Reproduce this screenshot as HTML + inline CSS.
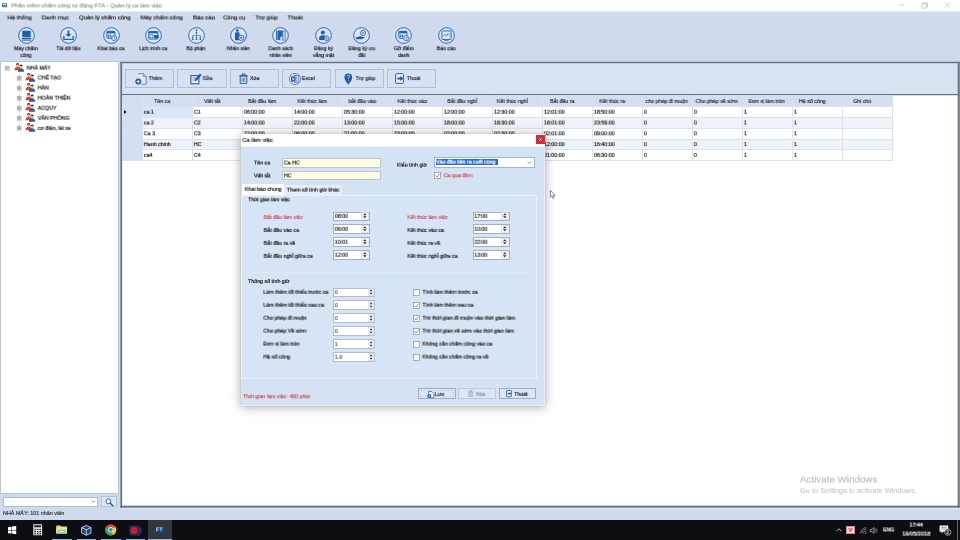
<!DOCTYPE html>
<html><head><meta charset="utf-8"><title>Quản lý ca làm việc</title>
<style>
*{box-sizing:border-box;margin:0;padding:0}
html,body{width:960px;height:540px;overflow:hidden}
body{will-change:opacity;position:relative;background:#cfdbed;font-family:"Liberation Sans",sans-serif;font-size:5.3px;color:#181818;line-height:1;-webkit-text-stroke:0.2px}
.abs{position:absolute}
.t,.tc{will-change:transform;position:absolute;left:0;top:0;white-space:nowrap;line-height:1}
svg{position:absolute;overflow:visible}
</style></head><body>

<div class="abs" id="titlebar" style="left:0;top:0;width:960px;height:11px;background:#fff"></div>
<div class="abs" style="left:0;top:11px;width:960px;height:1px;background:#e9eff8"></div>
<svg style="left:2.4px;top:3.2px" width="5.4" height="4.6" viewBox="0 0 7 6"><rect x="0" y="0.3" width="6.6" height="5.2" rx="0.8" fill="#2f5d9a"/><rect x="1" y="1.2" width="4.6" height="1.6" fill="#dfe8f5"/><rect x="1" y="3.6" width="1.8" height="1.2" fill="#9fb9dc"/><rect x="3.6" y="3.6" width="2" height="1.2" fill="#9fb9dc"/></svg>
<div class="t" style="transform:translate(11.3px,6.42px) translateY(-50%) rotate(.03deg);font-size:5.95px;color:#9a9a9a">Phần mềm chấm công tự động FTA - Quản lý ca làm việc</div>
<svg style="left:895px;top:0" width="65" height="11" viewBox="0 0 65 11"><g stroke="#a9a9a9" stroke-width="0.55" fill="none"><path d="M4.2 5.1h5"/><path d="M27 3.9h4.3v4.3H27z M28.2 3.9V2.8h4.2v4.2h-1.1"/><path d="M50 2.7l4.8 4.8M54.8 2.7L50 7.5"/></g></svg>
<div class="abs" style="left:0;top:24px;width:960px;height:38px;background:linear-gradient(#cfdbed,#cfd9ef)"></div>
<div class="t" style="transform:translate(7.5px,17.42px) translateY(-50%) rotate(.03deg);font-size:6px;color:#1e1e1e">Hệ thống</div>
<div class="t" style="transform:translate(41.7px,17.42px) translateY(-50%) rotate(.03deg);font-size:6px;color:#1e1e1e">Danh mục</div>
<div class="t" style="transform:translate(79px,17.42px) translateY(-50%) rotate(.03deg);font-size:6px;color:#1e1e1e">Quản lý chấm công</div>
<div class="t" style="transform:translate(140.5px,17.42px) translateY(-50%) rotate(.03deg);font-size:6px;color:#1e1e1e">Máy chấm công</div>
<div class="t" style="transform:translate(193px,17.42px) translateY(-50%) rotate(.03deg);font-size:6px;color:#1e1e1e">Báo cáo</div>
<div class="t" style="transform:translate(223.2px,17.42px) translateY(-50%) rotate(.03deg);font-size:6px;color:#1e1e1e">Công cụ</div>
<div class="t" style="transform:translate(255.5px,17.42px) translateY(-50%) rotate(.03deg);font-size:6px;color:#1e1e1e">Trợ giúp</div>
<div class="t" style="transform:translate(287.5px,17.42px) translateY(-50%) rotate(.03deg);font-size:6px;color:#1e1e1e">Thoát</div>
<svg style="left:17.5px;top:26.6px" width="17" height="17" viewBox="-8.5 -8.5 17 17"><circle r="7.85" fill="#d9e6f6" stroke="#2c63a3" stroke-width="0.95"/><rect x="-4.2" y="-4.8" width="8.4" height="6.6" rx="0.6" fill="#1f5fb0"/><rect x="-4.6" y="2.4" width="9.2" height="1.3" fill="#1f5fb0"/><rect x="-4.6" y="4.2" width="9.2" height="0.9" fill="#1f5fb0"/></svg>
<div class="tc" style="transform:translate(26px,48.81px) translate(-50%,-50%) rotate(.03deg);color:#1c1c1c;font-size:5.15px">Máy chấm</div>
<div class="tc" style="transform:translate(26px,55.61px) translate(-50%,-50%) rotate(.03deg);color:#1c1c1c;font-size:5.15px">công</div>
<svg style="left:60px;top:26.6px" width="17" height="17" viewBox="-8.5 -8.5 17 17"><circle r="7.85" fill="#d9e6f6" stroke="#2c63a3" stroke-width="0.95"/><path d="M-0.9 -5h1.8v3.4h2L0 1.6l-2.9-3.2h2z" fill="#1f5fb0"/><path d="M-4.6 0.2v3.6h9.2V0.2" fill="none" stroke="#1f5fb0" stroke-width="1.3"/></svg>
<div class="tc" style="transform:translate(68.5px,48.81px) translate(-50%,-50%) rotate(.03deg);color:#1c1c1c;font-size:5.15px">Tải dữ liệu</div>
<svg style="left:102.5px;top:26.6px" width="17" height="17" viewBox="-8.5 -8.5 17 17"><circle r="7.85" fill="#d9e6f6" stroke="#2c63a3" stroke-width="0.95"/><rect x="-4.6" y="-4.2" width="8" height="7" rx="0.6" fill="none" stroke="#1f5fb0" stroke-width="0.9"/><rect x="-4.6" y="-4.2" width="8" height="2" fill="#1f5fb0"/><path d="M-3 -1v3M-1 -1v3M-4 0.6h4" stroke="#1f5fb0" stroke-width="0.7"/><circle cx="2.6" cy="2.6" r="2.5" fill="#d9e6f6" stroke="#1f5fb0" stroke-width="0.8"/><path d="M2.6 1.2v1.5h1.2" fill="none" stroke="#1f5fb0" stroke-width="0.6"/></svg>
<div class="tc" style="transform:translate(111px,48.81px) translate(-50%,-50%) rotate(.03deg);color:#1c1c1c;font-size:5.15px">Khai báo ca</div>
<svg style="left:144.8px;top:26.6px" width="17" height="17" viewBox="-8.5 -8.5 17 17"><circle r="7.85" fill="#d9e6f6" stroke="#2c63a3" stroke-width="0.95"/><rect x="-4.8" y="-4" width="9.2" height="7.6" rx="0.6" fill="none" stroke="#1f5fb0" stroke-width="0.9"/><rect x="-4.8" y="-4" width="9.2" height="1.8" fill="#1f5fb0"/><rect x="-3.6" y="-0.8" width="3" height="3.2" fill="none" stroke="#1f5fb0" stroke-width="0.6"/><rect x="0.4" y="-0.4" width="4.6" height="3.4" rx="0.8" fill="#1f5fb0"/></svg>
<div class="tc" style="transform:translate(153.3px,48.81px) translate(-50%,-50%) rotate(.03deg);color:#1c1c1c;font-size:5.15px">Lịch trình ca</div>
<svg style="left:187.5px;top:26.6px" width="17" height="17" viewBox="-8.5 -8.5 17 17"><circle r="7.85" fill="#d9e6f6" stroke="#2c63a3" stroke-width="0.95"/><circle cx="0" cy="-5.2" r="0.9" fill="#1f5fb0"/><path d="M-0.9 -2.2q0-1.8 0.9-1.8t0.9 1.8z" fill="#1f5fb0"/><path d="M0 -2.2v2.2M-3.8 1.6v-1.6h7.6v1.6M0 0v1.6" fill="none" stroke="#1f5fb0" stroke-width="0.6"/><g fill="#1f5fb0"><circle cx="-3.8" cy="2" r="0.7"/><path d="M-4.7 4.4q0-1.6 0.9-1.6t0.9 1.6z"/><circle cx="0" cy="2" r="0.7"/><path d="M-0.9 4.4q0-1.6 0.9-1.6t0.9 1.6z"/><circle cx="3.8" cy="2" r="0.7"/><path d="M2.9 4.4q0-1.6 0.9-1.6t0.9 1.6z"/></g></svg>
<div class="tc" style="transform:translate(196px,48.81px) translate(-50%,-50%) rotate(.03deg);color:#1c1c1c;font-size:5.15px">Bộ phận</div>
<svg style="left:229.8px;top:26.6px" width="17" height="17" viewBox="-8.5 -8.5 17 17"><circle r="7.85" fill="#d9e6f6" stroke="#2c63a3" stroke-width="0.95"/><circle cx="-1.2" cy="-4.9" r="1.4" fill="#1f5fb0"/><path d="M-3.5 4.8v-6.8q0-1.2 1.2-1.2h2.2q1.2 0 1.2 1.2v6.8z" fill="#1f5fb0"/><circle cx="2.8" cy="2.3" r="2.7" fill="#d9e6f6" stroke="#1f5fb0" stroke-width="0.8"/><path d="M2.8 0.9v2.8M1.4 2.3h2.8" stroke="#1f5fb0" stroke-width="0.7"/></svg>
<div class="tc" style="transform:translate(238.3px,48.81px) translate(-50%,-50%) rotate(.03deg);color:#1c1c1c;font-size:5.15px">Nhân viên</div>
<svg style="left:272.2px;top:26.6px" width="17" height="17" viewBox="-8.5 -8.5 17 17"><circle r="7.85" fill="#d9e6f6" stroke="#2c63a3" stroke-width="0.95"/><rect x="-4.4" y="-5" width="6.4" height="9.6" fill="#1f5fb0"/><path d="M-2.8 -5v9.6" stroke="#d9e6f6" stroke-width="0.5"/><rect x="2.4" y="-4.6" width="2.2" height="9.2" fill="none" stroke="#1f5fb0" stroke-width="0.7"/><path d="M-0.2 4.6v-2.6l1-1.4 1 1.4v2.6z" fill="#d9e6f6"/></svg>
<div class="tc" style="transform:translate(280.7px,48.81px) translate(-50%,-50%) rotate(.03deg);color:#1c1c1c;font-size:5.15px">Danh sách</div>
<div class="tc" style="transform:translate(280.7px,55.61px) translate(-50%,-50%) rotate(.03deg);color:#1c1c1c;font-size:5.15px">nhân viên</div>
<svg style="left:315.1px;top:26.6px" width="17" height="17" viewBox="-8.5 -8.5 17 17"><circle r="7.85" fill="#d9e6f6" stroke="#2c63a3" stroke-width="0.95"/><circle cx="-0.6" cy="-3" r="2.1" fill="#1f5fb0"/><path d="M-4.4 4.6v-1.8q0-3 3.8-3t3.8 3v1.8z" fill="#1f5fb0"/><circle cx="3" cy="2.8" r="2.3" fill="#d9e6f6" stroke="#1f5fb0" stroke-width="0.8"/><path d="M3 1.6v2.4M1.8 2.8h2.4" stroke="#1f5fb0" stroke-width="0.6"/></svg>
<div class="tc" style="transform:translate(323.6px,48.81px) translate(-50%,-50%) rotate(.03deg);color:#1c1c1c;font-size:5.15px">Đăng ký</div>
<div class="tc" style="transform:translate(323.6px,55.61px) translate(-50%,-50%) rotate(.03deg);color:#1c1c1c;font-size:5.15px">vắng mặt</div>
<svg style="left:353.3px;top:26.6px" width="17" height="17" viewBox="-8.5 -8.5 17 17"><circle r="7.85" fill="#d9e6f6" stroke="#2c63a3" stroke-width="0.95"/><circle cx="1.6" cy="-2.6" r="2.6" fill="none" stroke="#1f5fb0" stroke-width="0.8"/><path d="M1.6 -3.8v2.4M0.4 -2.6h2.4" stroke="#1f5fb0" stroke-width="0.6"/><path d="M-5.4 1.4h2l2-0.8 2.6 0.8h-2l4.6 0.2-3.4 2.2h-5.8z" fill="#1f5fb0"/></svg>
<div class="tc" style="transform:translate(361.8px,48.81px) translate(-50%,-50%) rotate(.03deg);color:#1c1c1c;font-size:5.15px">Đăng ký ưu</div>
<div class="tc" style="transform:translate(361.8px,55.61px) translate(-50%,-50%) rotate(.03deg);color:#1c1c1c;font-size:5.15px">đãi</div>
<svg style="left:395.3px;top:26.6px" width="17" height="17" viewBox="-8.5 -8.5 17 17"><circle r="7.85" fill="#d9e6f6" stroke="#2c63a3" stroke-width="0.95"/><rect x="-4.6" y="-4.2" width="8" height="7" rx="0.6" fill="none" stroke="#1f5fb0" stroke-width="0.9"/><rect x="-4.6" y="-4.2" width="8" height="2" fill="#1f5fb0"/><path d="M-3 -1v3M-1 -1v3M-4 0.6h4" stroke="#1f5fb0" stroke-width="0.7"/><circle cx="2.6" cy="2.6" r="2.5" fill="#d9e6f6" stroke="#1f5fb0" stroke-width="0.8"/><path d="M2.6 1.2v1.5h1.2" fill="none" stroke="#1f5fb0" stroke-width="0.6"/></svg>
<div class="tc" style="transform:translate(403.8px,48.81px) translate(-50%,-50%) rotate(.03deg);color:#1c1c1c;font-size:5.15px">Gỡ điểm</div>
<div class="tc" style="transform:translate(403.8px,55.61px) translate(-50%,-50%) rotate(.03deg);color:#1c1c1c;font-size:5.15px">danh</div>
<svg style="left:437.7px;top:26.6px" width="17" height="17" viewBox="-8.5 -8.5 17 17"><circle r="7.85" fill="#d9e6f6" stroke="#2c63a3" stroke-width="0.95"/><rect x="-4.6" y="-4.6" width="9.2" height="8.6" rx="0.8" fill="none" stroke="#1f5fb0" stroke-width="0.9"/><path d="M-3.2 0.4l1.8-1.4 1.4 1.6 1.6-2.4 1.6 1.4" fill="none" stroke="#1f5fb0" stroke-width="0.7"/><path d="M-2 5.2h4" stroke="#1f5fb0" stroke-width="0.8"/></svg>
<div class="tc" style="transform:translate(446.2px,48.81px) translate(-50%,-50%) rotate(.03deg);color:#1c1c1c;font-size:5.15px">Báo cáo</div>
<div class="abs" style="left:0px;top:61px;width:119px;height:433px;background:#fff;border:1px solid #bcc6d4"></div>
<div class="abs" style="left:18.8px;top:73px;width:0;height:55px;border-left:0.5px dotted #d0d0d0"></div>
<svg style="left:5.4px;top:66.2px" width="4.4" height="4.4" viewBox="0 0 4.4 4.4"><rect x="0.3" y="0.3" width="3.8" height="3.8" fill="#e2e2e2" stroke="#9c9c9c" stroke-width="0.7"/><path d="M1.2 2.2h2" stroke="#444" stroke-width="0.5"/></svg>
<svg style="left:13.8px;top:63.3px" width="11" height="9" viewBox="0 0 11 9"><circle cx="3.6" cy="2.1" r="1.6" fill="#e9a57f"/><path d="M1.9 1.9q0.2-1.9 1.8-1.9t1.7 1.7q-1.5 0.1-2-0.7-0.4 0.9-1.5 0.9z" fill="#4a2a1c"/><path d="M0.5 7.2q0-3.5 3.1-3.5t3.1 3.5z" fill="#d8452d"/><circle cx="7" cy="3.6" r="1.6" fill="#ecc09c"/><path d="M5.3 3.4q0.2-1.9 1.8-1.9t1.7 1.7q-1.5 0.1-2-0.7-0.4 0.9-1.5 0.9z" fill="#2a2422"/><path d="M3.9 8.8q0-3.5 3.1-3.5t3.1 3.5z" fill="#2a5aa3"/></svg>
<div class="t" style="transform:translate(26.7px,68.36px) translateY(-50%) rotate(.03deg);">NHÀ MÁY</div>
<svg style="left:17px;top:76px" width="4.4" height="4.4" viewBox="0 0 4.4 4.4"><rect x="0.3" y="0.3" width="3.8" height="3.8" fill="#e2e2e2" stroke="#9c9c9c" stroke-width="0.7"/><path d="M1.2 2.2h2M2.2 1.2v2" stroke="#444" stroke-width="0.5"/></svg>
<svg style="left:25.4px;top:72.9px" width="11" height="9" viewBox="0 0 11 9"><circle cx="3.6" cy="2.1" r="1.6" fill="#e9a57f"/><path d="M1.9 1.9q0.2-1.9 1.8-1.9t1.7 1.7q-1.5 0.1-2-0.7-0.4 0.9-1.5 0.9z" fill="#4a2a1c"/><path d="M0.5 7.2q0-3.5 3.1-3.5t3.1 3.5z" fill="#d8452d"/><circle cx="7" cy="3.6" r="1.6" fill="#ecc09c"/><path d="M5.3 3.4q0.2-1.9 1.8-1.9t1.7 1.7q-1.5 0.1-2-0.7-0.4 0.9-1.5 0.9z" fill="#2a2422"/><path d="M3.9 8.8q0-3.5 3.1-3.5t3.1 3.5z" fill="#2a5aa3"/></svg>
<div class="t" style="transform:translate(37.7px,78.16px) translateY(-50%) rotate(.03deg);">CHẾ TẠO</div>
<svg style="left:17px;top:86.08px" width="4.4" height="4.4" viewBox="0 0 4.4 4.4"><rect x="0.3" y="0.3" width="3.8" height="3.8" fill="#e2e2e2" stroke="#9c9c9c" stroke-width="0.7"/><path d="M1.2 2.2h2M2.2 1.2v2" stroke="#444" stroke-width="0.5"/></svg>
<svg style="left:25.4px;top:82.98px" width="11" height="9" viewBox="0 0 11 9"><circle cx="3.6" cy="2.1" r="1.6" fill="#e9a57f"/><path d="M1.9 1.9q0.2-1.9 1.8-1.9t1.7 1.7q-1.5 0.1-2-0.7-0.4 0.9-1.5 0.9z" fill="#4a2a1c"/><path d="M0.5 7.2q0-3.5 3.1-3.5t3.1 3.5z" fill="#d8452d"/><circle cx="7" cy="3.6" r="1.6" fill="#ecc09c"/><path d="M5.3 3.4q0.2-1.9 1.8-1.9t1.7 1.7q-1.5 0.1-2-0.7-0.4 0.9-1.5 0.9z" fill="#2a2422"/><path d="M3.9 8.8q0-3.5 3.1-3.5t3.1 3.5z" fill="#2a5aa3"/></svg>
<div class="t" style="transform:translate(37.7px,88.24px) translateY(-50%) rotate(.03deg);">HÀN</div>
<svg style="left:17px;top:96.16px" width="4.4" height="4.4" viewBox="0 0 4.4 4.4"><rect x="0.3" y="0.3" width="3.8" height="3.8" fill="#e2e2e2" stroke="#9c9c9c" stroke-width="0.7"/><path d="M1.2 2.2h2M2.2 1.2v2" stroke="#444" stroke-width="0.5"/></svg>
<svg style="left:25.4px;top:93.06px" width="11" height="9" viewBox="0 0 11 9"><circle cx="3.6" cy="2.1" r="1.6" fill="#e9a57f"/><path d="M1.9 1.9q0.2-1.9 1.8-1.9t1.7 1.7q-1.5 0.1-2-0.7-0.4 0.9-1.5 0.9z" fill="#4a2a1c"/><path d="M0.5 7.2q0-3.5 3.1-3.5t3.1 3.5z" fill="#d8452d"/><circle cx="7" cy="3.6" r="1.6" fill="#ecc09c"/><path d="M5.3 3.4q0.2-1.9 1.8-1.9t1.7 1.7q-1.5 0.1-2-0.7-0.4 0.9-1.5 0.9z" fill="#2a2422"/><path d="M3.9 8.8q0-3.5 3.1-3.5t3.1 3.5z" fill="#2a5aa3"/></svg>
<div class="t" style="transform:translate(37.7px,98.32px) translateY(-50%) rotate(.03deg);">HOÀN THIỆN</div>
<svg style="left:17px;top:106.24px" width="4.4" height="4.4" viewBox="0 0 4.4 4.4"><rect x="0.3" y="0.3" width="3.8" height="3.8" fill="#e2e2e2" stroke="#9c9c9c" stroke-width="0.7"/><path d="M1.2 2.2h2M2.2 1.2v2" stroke="#444" stroke-width="0.5"/></svg>
<svg style="left:25.4px;top:103.14px" width="11" height="9" viewBox="0 0 11 9"><circle cx="3.6" cy="2.1" r="1.6" fill="#e9a57f"/><path d="M1.9 1.9q0.2-1.9 1.8-1.9t1.7 1.7q-1.5 0.1-2-0.7-0.4 0.9-1.5 0.9z" fill="#4a2a1c"/><path d="M0.5 7.2q0-3.5 3.1-3.5t3.1 3.5z" fill="#d8452d"/><circle cx="7" cy="3.6" r="1.6" fill="#ecc09c"/><path d="M5.3 3.4q0.2-1.9 1.8-1.9t1.7 1.7q-1.5 0.1-2-0.7-0.4 0.9-1.5 0.9z" fill="#2a2422"/><path d="M3.9 8.8q0-3.5 3.1-3.5t3.1 3.5z" fill="#2a5aa3"/></svg>
<div class="t" style="transform:translate(37.7px,108.4px) translateY(-50%) rotate(.03deg);">ACQUY</div>
<svg style="left:17px;top:116.32px" width="4.4" height="4.4" viewBox="0 0 4.4 4.4"><rect x="0.3" y="0.3" width="3.8" height="3.8" fill="#e2e2e2" stroke="#9c9c9c" stroke-width="0.7"/><path d="M1.2 2.2h2M2.2 1.2v2" stroke="#444" stroke-width="0.5"/></svg>
<svg style="left:25.4px;top:113.22px" width="11" height="9" viewBox="0 0 11 9"><circle cx="3.6" cy="2.1" r="1.6" fill="#e9a57f"/><path d="M1.9 1.9q0.2-1.9 1.8-1.9t1.7 1.7q-1.5 0.1-2-0.7-0.4 0.9-1.5 0.9z" fill="#4a2a1c"/><path d="M0.5 7.2q0-3.5 3.1-3.5t3.1 3.5z" fill="#d8452d"/><circle cx="7" cy="3.6" r="1.6" fill="#ecc09c"/><path d="M5.3 3.4q0.2-1.9 1.8-1.9t1.7 1.7q-1.5 0.1-2-0.7-0.4 0.9-1.5 0.9z" fill="#2a2422"/><path d="M3.9 8.8q0-3.5 3.1-3.5t3.1 3.5z" fill="#2a5aa3"/></svg>
<div class="t" style="transform:translate(37.7px,118.48px) translateY(-50%) rotate(.03deg);">VĂN PHÒNG</div>
<svg style="left:17px;top:126.4px" width="4.4" height="4.4" viewBox="0 0 4.4 4.4"><rect x="0.3" y="0.3" width="3.8" height="3.8" fill="#e2e2e2" stroke="#9c9c9c" stroke-width="0.7"/><path d="M1.2 2.2h2M2.2 1.2v2" stroke="#444" stroke-width="0.5"/></svg>
<svg style="left:25.4px;top:123.3px" width="11" height="9" viewBox="0 0 11 9"><circle cx="3.6" cy="2.1" r="1.6" fill="#e9a57f"/><path d="M1.9 1.9q0.2-1.9 1.8-1.9t1.7 1.7q-1.5 0.1-2-0.7-0.4 0.9-1.5 0.9z" fill="#4a2a1c"/><path d="M0.5 7.2q0-3.5 3.1-3.5t3.1 3.5z" fill="#d8452d"/><circle cx="7" cy="3.6" r="1.6" fill="#ecc09c"/><path d="M5.3 3.4q0.2-1.9 1.8-1.9t1.7 1.7q-1.5 0.1-2-0.7-0.4 0.9-1.5 0.9z" fill="#2a2422"/><path d="M3.9 8.8q0-3.5 3.1-3.5t3.1 3.5z" fill="#2a5aa3"/></svg>
<div class="t" style="transform:translate(37.7px,128.56px) translateY(-50%) rotate(.03deg);">cơ điện, lái xe</div>
<div class="abs" style="left:2.5px;top:496.6px;width:95.2px;height:10px;background:#fff;border:0.5px solid #b1bed2"></div>
<svg style="left:90.5px;top:500px" width="5" height="3" viewBox="0 0 5 3"><path d="M0.6 0.5l1.9 1.9 1.9-1.9" fill="none" stroke="#555" stroke-width="0.6"/></svg>
<div class="abs" style="left:101.2px;top:495.8px;width:15.6px;height:11.6px;background:#dce7f6;border:0.5px solid #b7c5da"></div>
<svg style="left:104.5px;top:497.6px" width="9" height="9" viewBox="0 0 9 9"><circle cx="3.4" cy="3.4" r="2.5" fill="#eaf2fb" stroke="#2f5f9f" stroke-width="0.9"/><path d="M5.3 5.3l2.6 2.6" stroke="#27466f" stroke-width="1.3" stroke-linecap="round"/></svg>
<div class="t" style="transform:translate(3px,513.68px) translateY(-50%) rotate(.03deg);color:#3c3c3c;font-size:5.4px">NHÀ MÁY: 101 nhân viên</div>
<div class="abs" id="rp" style="left:121px;top:62px;width:838px;height:445px;background:#d8e4f4"></div>
<div class="abs" style="left:124.7px;top:69.3px;width:49.3px;height:18.3px;background:#d6e2f3;border:0.6px solid #b1c0d7"></div>
<svg style="left:135.1px;top:72.6px" width="12" height="12" viewBox="0 0 12 12"><path d="M3.2 0.6h5l3 3v7.6H6.4" fill="#e4edf9" stroke="#2f5f9f" stroke-width="0.7"/><path d="M8.2 0.6v3h3" fill="none" stroke="#2f5f9f" stroke-width="0.6"/><circle cx="3.3" cy="8.6" r="3" fill="#1f5aa8"/><path d="M3.3 6.9v3.4M1.6 8.6h3.4" stroke="#fff" stroke-width="0.9"/></svg>
<div class="t" style="transform:translate(148.7px,78.76px) translateY(-50%) rotate(.03deg);font-size:5.3px;color:#2a2a2a">Thêm</div>
<div class="abs" style="left:177.3px;top:69.3px;width:49.3px;height:18.3px;background:#d6e2f3;border:0.6px solid #b1c0d7"></div>
<svg style="left:189.9px;top:72.6px" width="12" height="12" viewBox="0 0 12 12"><rect x="0.9" y="2.6" width="8" height="8.2" fill="#e4edf9" stroke="#2f5f9f" stroke-width="1.1"/><path d="M2.6 5h3M2.6 7h2.2" stroke="#2f5f9f" stroke-width="0.7"/><path d="M4.6 8.2l0.7-2.4L10 0.6l1.6 1.5-4.7 5.3z" fill="#1f5aa8"/></svg>
<div class="t" style="transform:translate(202.5px,78.76px) translateY(-50%) rotate(.03deg);font-size:5.3px;color:#2a2a2a">Sửa</div>
<div class="abs" style="left:229.8px;top:69.3px;width:49.3px;height:18.3px;background:#d6e2f3;border:0.6px solid #b1c0d7"></div>
<svg style="left:238.6px;top:72.8px" width="9" height="11" viewBox="0 0 9 11"><path d="M1.2 3.2h6.6v7.2H1.2z" fill="#dfe9f7" stroke="#2f5f9f" stroke-width="1"/><path d="M0.3 2.6h8.4M3 2.4V0.9h3v1.5" fill="none" stroke="#2f5f9f" stroke-width="1"/><path d="M3.1 4.8v4M4.5 4.8v4M5.9 4.8v4" stroke="#2f5f9f" stroke-width="0.7"/></svg>
<div class="t" style="transform:translate(250px,78.76px) translateY(-50%) rotate(.03deg);font-size:5.3px;color:#2a2a2a">Xóa</div>
<div class="abs" style="left:282.2px;top:69.3px;width:49.3px;height:18.3px;background:#d6e2f3;border:0.6px solid #b1c0d7"></div>
<svg style="left:288.7px;top:72.5px" width="12" height="12" viewBox="0 0 12 12"><circle cx="6" cy="6" r="5.6" fill="#e4edf9" stroke="#2f5f9f" stroke-width="0.7"/><rect x="5.6" y="2.6" width="4.2" height="6.8" fill="#f4f8fd" stroke="#2f5f9f" stroke-width="0.6"/><path d="M7.6 2.6v6.8M5.6 4.8h4.2M5.6 7.2h4.2" stroke="#2f5f9f" stroke-width="0.4"/><rect x="2" y="3.4" width="4.6" height="5.2" fill="#1f5aa8"/><path d="M3.2 4.6l2.2 2.8M5.4 4.6L3.2 7.4" stroke="#fff" stroke-width="0.7"/></svg>
<div class="t" style="transform:translate(301.9px,78.76px) translateY(-50%) rotate(.03deg);font-size:5.3px;color:#2a2a2a">Excel</div>
<div class="abs" style="left:334.6px;top:69.3px;width:49.3px;height:18.3px;background:#d6e2f3;border:0.6px solid #b1c0d7"></div>
<svg style="left:343.6px;top:72.7px" width="8.6" height="12" viewBox="0 0 8.6 12"><path d="M4.3 11.8C2.4 8.8 0.4 7 0.4 4.4a3.9 3.9 0 017.8 0C8.2 7 6.2 8.8 4.3 11.8z" fill="#1f5aa8"/><path d="M3 3.4q0.1-1.2 1.4-1.2t1.3 1.1q0 0.8-1.3 1.5v0.8" fill="none" stroke="#e4edf9" stroke-width="0.8"/><circle cx="4.4" cy="6.9" r="0.5" fill="#e4edf9"/></svg>
<div class="t" style="transform:translate(355.6px,78.76px) translateY(-50%) rotate(.03deg);font-size:5.3px;color:#2a2a2a">Trợ giúp</div>
<div class="abs" style="left:387px;top:69.3px;width:49.3px;height:18.3px;background:#d6e2f3;border:0.6px solid #b1c0d7"></div>
<svg style="left:395px;top:73px" width="9" height="11" viewBox="0 0 9 11"><rect x="0.6" y="0.6" width="7.8" height="9.8" rx="0.8" fill="#e4edf9" stroke="#2f5f9f" stroke-width="1"/><path d="M2.4 4.6h3V3l3 2.5-3 2.5V6.4h-3z" fill="#1f5aa8"/></svg>
<div class="t" style="transform:translate(406.9px,78.76px) translateY(-50%) rotate(.03deg);font-size:5.3px;color:#2a2a2a">Thoát</div>
<div class="abs" style="left:122px;top:94px;width:836px;height:412px;background:#fff"></div>
<div class="abs" style="left:122px;top:93px;width:836px;height:1px;background:#eef4fb"></div>
<svg style="left:0;top:0" width="960" height="540" viewBox="0 0 960 540"><g fill="#657082"><rect x="120.4" y="61.8" width="839.3" height="1.4"/><rect x="120.4" y="61.8" width="1.7" height="445.8"/><rect x="957.7" y="61.8" width="2" height="445.8"/><rect x="120.4" y="505.7" width="839.3" height="1.9"/><rect x="121" y="93.85" width="837" height="1.4"/></g></svg>
<div class="abs" style="left:121px;top:508px;width:839px;height:1px;background:#dfe9f7"></div>
<div class="abs" style="left:122px;top:95.2px;width:770.6px;height:11.3px;background:#d3dff1"></div>
<div class="abs" style="left:142.5px;top:106.5px;width:750.1px;height:10.78px;background:#fff"></div>
<div class="abs" style="left:122px;top:106.5px;width:20.5px;height:10.78px;background:#d3dff1"></div>
<div class="abs" style="left:142.5px;top:106.5px;width:50px;height:10.78px;background:#dbe7f8"></div>
<div class="t" style="transform:translate(143.9px,112.4px) translateY(-50%) rotate(.03deg);color:#181818">ca 1</div>
<div class="t" style="transform:translate(193.9px,112.4px) translateY(-50%) rotate(.03deg);color:#181818">C1</div>
<div class="t" style="transform:translate(243.9px,112.4px) translateY(-50%) rotate(.03deg);color:#181818">06:00:00</div>
<div class="t" style="transform:translate(293.9px,112.4px) translateY(-50%) rotate(.03deg);color:#181818">14:00:00</div>
<div class="t" style="transform:translate(343.9px,112.4px) translateY(-50%) rotate(.03deg);color:#181818">05:30:00</div>
<div class="t" style="transform:translate(393.9px,112.4px) translateY(-50%) rotate(.03deg);color:#181818">12:00:00</div>
<div class="t" style="transform:translate(443.9px,112.4px) translateY(-50%) rotate(.03deg);color:#181818">12:00:00</div>
<div class="t" style="transform:translate(493.9px,112.4px) translateY(-50%) rotate(.03deg);color:#181818">12:30:00</div>
<div class="t" style="transform:translate(543.9px,112.4px) translateY(-50%) rotate(.03deg);color:#181818">12:01:00</div>
<div class="t" style="transform:translate(593.9px,112.4px) translateY(-50%) rotate(.03deg);color:#181818">18:50:00</div>
<div class="t" style="transform:translate(643.9px,112.4px) translateY(-50%) rotate(.03deg);color:#181818">0</div>
<div class="t" style="transform:translate(693.9px,112.4px) translateY(-50%) rotate(.03deg);color:#181818">0</div>
<div class="t" style="transform:translate(743.9px,112.4px) translateY(-50%) rotate(.03deg);color:#181818">1</div>
<div class="t" style="transform:translate(793.9px,112.4px) translateY(-50%) rotate(.03deg);color:#181818">1</div>
<div class="abs" style="left:142.5px;top:117.28px;width:750.1px;height:10.78px;background:#eef2f9"></div>
<div class="abs" style="left:122px;top:117.28px;width:20.5px;height:10.78px;background:#d3dff1"></div>
<div class="t" style="transform:translate(143.9px,123.18px) translateY(-50%) rotate(.03deg);color:#181818">ca 2</div>
<div class="t" style="transform:translate(193.9px,123.18px) translateY(-50%) rotate(.03deg);color:#181818">C2</div>
<div class="t" style="transform:translate(243.9px,123.18px) translateY(-50%) rotate(.03deg);color:#181818">14:00:00</div>
<div class="t" style="transform:translate(293.9px,123.18px) translateY(-50%) rotate(.03deg);color:#181818">22:00:00</div>
<div class="t" style="transform:translate(343.9px,123.18px) translateY(-50%) rotate(.03deg);color:#181818">13:00:00</div>
<div class="t" style="transform:translate(393.9px,123.18px) translateY(-50%) rotate(.03deg);color:#181818">15:00:00</div>
<div class="t" style="transform:translate(443.9px,123.18px) translateY(-50%) rotate(.03deg);color:#181818">18:00:00</div>
<div class="t" style="transform:translate(493.9px,123.18px) translateY(-50%) rotate(.03deg);color:#181818">18:30:00</div>
<div class="t" style="transform:translate(543.9px,123.18px) translateY(-50%) rotate(.03deg);color:#181818">18:01:00</div>
<div class="t" style="transform:translate(593.9px,123.18px) translateY(-50%) rotate(.03deg);color:#181818">23:59:00</div>
<div class="t" style="transform:translate(643.9px,123.18px) translateY(-50%) rotate(.03deg);color:#181818">0</div>
<div class="t" style="transform:translate(693.9px,123.18px) translateY(-50%) rotate(.03deg);color:#181818">0</div>
<div class="t" style="transform:translate(743.9px,123.18px) translateY(-50%) rotate(.03deg);color:#181818">1</div>
<div class="t" style="transform:translate(793.9px,123.18px) translateY(-50%) rotate(.03deg);color:#181818">1</div>
<div class="abs" style="left:142.5px;top:128.06px;width:750.1px;height:10.78px;background:#fff"></div>
<div class="abs" style="left:122px;top:128.06px;width:20.5px;height:10.78px;background:#d3dff1"></div>
<div class="t" style="transform:translate(143.9px,133.96px) translateY(-50%) rotate(.03deg);color:#181818">Ca 3</div>
<div class="t" style="transform:translate(193.9px,133.96px) translateY(-50%) rotate(.03deg);color:#181818">C3</div>
<div class="t" style="transform:translate(243.9px,133.96px) translateY(-50%) rotate(.03deg);color:#181818">22:00:00</div>
<div class="t" style="transform:translate(293.9px,133.96px) translateY(-50%) rotate(.03deg);color:#181818">06:00:00</div>
<div class="t" style="transform:translate(343.9px,133.96px) translateY(-50%) rotate(.03deg);color:#181818">21:00:00</div>
<div class="t" style="transform:translate(393.9px,133.96px) translateY(-50%) rotate(.03deg);color:#181818">23:00:00</div>
<div class="t" style="transform:translate(443.9px,133.96px) translateY(-50%) rotate(.03deg);color:#181818">02:00:00</div>
<div class="t" style="transform:translate(493.9px,133.96px) translateY(-50%) rotate(.03deg);color:#181818">02:30:00</div>
<div class="t" style="transform:translate(543.9px,133.96px) translateY(-50%) rotate(.03deg);color:#181818">02:01:00</div>
<div class="t" style="transform:translate(593.9px,133.96px) translateY(-50%) rotate(.03deg);color:#181818">09:00:00</div>
<div class="t" style="transform:translate(643.9px,133.96px) translateY(-50%) rotate(.03deg);color:#181818">0</div>
<div class="t" style="transform:translate(693.9px,133.96px) translateY(-50%) rotate(.03deg);color:#181818">0</div>
<div class="t" style="transform:translate(743.9px,133.96px) translateY(-50%) rotate(.03deg);color:#181818">1</div>
<div class="t" style="transform:translate(793.9px,133.96px) translateY(-50%) rotate(.03deg);color:#181818">1</div>
<div class="abs" style="left:142.5px;top:138.84px;width:750.1px;height:10.78px;background:#eef2f9"></div>
<div class="abs" style="left:122px;top:138.84px;width:20.5px;height:10.78px;background:#d3dff1"></div>
<div class="t" style="transform:translate(143.9px,144.74px) translateY(-50%) rotate(.03deg);color:#181818">Hanh chinh</div>
<div class="t" style="transform:translate(193.9px,144.74px) translateY(-50%) rotate(.03deg);color:#181818">HC</div>
<div class="t" style="transform:translate(243.9px,144.74px) translateY(-50%) rotate(.03deg);color:#181818">08:00:00</div>
<div class="t" style="transform:translate(293.9px,144.74px) translateY(-50%) rotate(.03deg);color:#181818">17:00:00</div>
<div class="t" style="transform:translate(343.9px,144.74px) translateY(-50%) rotate(.03deg);color:#181818">06:00:00</div>
<div class="t" style="transform:translate(393.9px,144.74px) translateY(-50%) rotate(.03deg);color:#181818">10:00:00</div>
<div class="t" style="transform:translate(443.9px,144.74px) translateY(-50%) rotate(.03deg);color:#181818">12:00:00</div>
<div class="t" style="transform:translate(493.9px,144.74px) translateY(-50%) rotate(.03deg);color:#181818">13:00:00</div>
<div class="t" style="transform:translate(543.9px,144.74px) translateY(-50%) rotate(.03deg);color:#181818">12:00:00</div>
<div class="t" style="transform:translate(593.9px,144.74px) translateY(-50%) rotate(.03deg);color:#181818">16:40:00</div>
<div class="t" style="transform:translate(643.9px,144.74px) translateY(-50%) rotate(.03deg);color:#181818">0</div>
<div class="t" style="transform:translate(693.9px,144.74px) translateY(-50%) rotate(.03deg);color:#181818">0</div>
<div class="t" style="transform:translate(743.9px,144.74px) translateY(-50%) rotate(.03deg);color:#181818">1</div>
<div class="t" style="transform:translate(793.9px,144.74px) translateY(-50%) rotate(.03deg);color:#181818">1</div>
<div class="abs" style="left:142.5px;top:149.62px;width:750.1px;height:10.78px;background:#fff"></div>
<div class="abs" style="left:122px;top:149.62px;width:20.5px;height:10.78px;background:#d3dff1"></div>
<div class="t" style="transform:translate(143.9px,155.52px) translateY(-50%) rotate(.03deg);color:#181818">ca4</div>
<div class="t" style="transform:translate(193.9px,155.52px) translateY(-50%) rotate(.03deg);color:#181818">C4</div>
<div class="t" style="transform:translate(243.9px,155.52px) translateY(-50%) rotate(.03deg);color:#181818">22:00:00</div>
<div class="t" style="transform:translate(293.9px,155.52px) translateY(-50%) rotate(.03deg);color:#181818">06:00:00</div>
<div class="t" style="transform:translate(343.9px,155.52px) translateY(-50%) rotate(.03deg);color:#181818">21:00:00</div>
<div class="t" style="transform:translate(393.9px,155.52px) translateY(-50%) rotate(.03deg);color:#181818">23:00:00</div>
<div class="t" style="transform:translate(443.9px,155.52px) translateY(-50%) rotate(.03deg);color:#181818">01:00:00</div>
<div class="t" style="transform:translate(493.9px,155.52px) translateY(-50%) rotate(.03deg);color:#181818">01:30:00</div>
<div class="t" style="transform:translate(543.9px,155.52px) translateY(-50%) rotate(.03deg);color:#181818">01:00:00</div>
<div class="t" style="transform:translate(593.9px,155.52px) translateY(-50%) rotate(.03deg);color:#181818">06:30:00</div>
<div class="t" style="transform:translate(643.9px,155.52px) translateY(-50%) rotate(.03deg);color:#181818">0</div>
<div class="t" style="transform:translate(693.9px,155.52px) translateY(-50%) rotate(.03deg);color:#181818">0</div>
<div class="t" style="transform:translate(743.9px,155.52px) translateY(-50%) rotate(.03deg);color:#181818">1</div>
<div class="t" style="transform:translate(793.9px,155.52px) translateY(-50%) rotate(.03deg);color:#181818">1</div>
<div class="tc" style="transform:translate(162.3px,101.66px) translate(-50%,-50%) rotate(.03deg);color:#333">Tên ca</div>
<div class="tc" style="transform:translate(212.3px,101.66px) translate(-50%,-50%) rotate(.03deg);color:#333">Viết tắt</div>
<div class="tc" style="transform:translate(262.3px,101.66px) translate(-50%,-50%) rotate(.03deg);color:#333">Bắt đầu làm</div>
<div class="tc" style="transform:translate(312.3px,101.66px) translate(-50%,-50%) rotate(.03deg);color:#333">Kết thúc làm</div>
<div class="tc" style="transform:translate(362.3px,101.66px) translate(-50%,-50%) rotate(.03deg);color:#333">bắt đầu vào</div>
<div class="tc" style="transform:translate(412.3px,101.66px) translate(-50%,-50%) rotate(.03deg);color:#333">Kết thúc vào</div>
<div class="tc" style="transform:translate(462.3px,101.66px) translate(-50%,-50%) rotate(.03deg);color:#333">Bắt đầu nghỉ</div>
<div class="tc" style="transform:translate(512.3px,101.66px) translate(-50%,-50%) rotate(.03deg);color:#333">Kết thúc nghỉ</div>
<div class="tc" style="transform:translate(562.3px,101.66px) translate(-50%,-50%) rotate(.03deg);color:#333">Bắt đầu ra</div>
<div class="tc" style="transform:translate(612.3px,101.66px) translate(-50%,-50%) rotate(.03deg);color:#333">Kết thúc ra</div>
<div class="tc" style="transform:translate(666.7px,101.66px) translate(-50%,-50%) rotate(.03deg);color:#333">cho phép đi muộn</div>
<div class="tc" style="transform:translate(716.7px,101.66px) translate(-50%,-50%) rotate(.03deg);color:#333">Cho phép về sớm</div>
<div class="tc" style="transform:translate(766.7px,101.66px) translate(-50%,-50%) rotate(.03deg);color:#333">Đơn vị làm tròn</div>
<div class="tc" style="transform:translate(812.3px,101.66px) translate(-50%,-50%) rotate(.03deg);color:#333">Hệ số công</div>
<div class="tc" style="transform:translate(862.35px,101.66px) translate(-50%,-50%) rotate(.03deg);color:#333">Ghi chú</div>
<div class="abs" style="left:142.2px;top:95.2px;width:0.6px;height:65.2px;background:#dbe2ed"></div>
<div class="abs" style="left:192.2px;top:95.2px;width:0.6px;height:65.2px;background:#dbe2ed"></div>
<div class="abs" style="left:242.2px;top:95.2px;width:0.6px;height:65.2px;background:#dbe2ed"></div>
<div class="abs" style="left:292.2px;top:95.2px;width:0.6px;height:65.2px;background:#dbe2ed"></div>
<div class="abs" style="left:342.2px;top:95.2px;width:0.6px;height:65.2px;background:#dbe2ed"></div>
<div class="abs" style="left:392.2px;top:95.2px;width:0.6px;height:65.2px;background:#dbe2ed"></div>
<div class="abs" style="left:442.2px;top:95.2px;width:0.6px;height:65.2px;background:#dbe2ed"></div>
<div class="abs" style="left:492.2px;top:95.2px;width:0.6px;height:65.2px;background:#dbe2ed"></div>
<div class="abs" style="left:542.2px;top:95.2px;width:0.6px;height:65.2px;background:#dbe2ed"></div>
<div class="abs" style="left:592.2px;top:95.2px;width:0.6px;height:65.2px;background:#dbe2ed"></div>
<div class="abs" style="left:642.2px;top:95.2px;width:0.6px;height:65.2px;background:#dbe2ed"></div>
<div class="abs" style="left:692.2px;top:95.2px;width:0.6px;height:65.2px;background:#dbe2ed"></div>
<div class="abs" style="left:742.2px;top:95.2px;width:0.6px;height:65.2px;background:#dbe2ed"></div>
<div class="abs" style="left:792.2px;top:95.2px;width:0.6px;height:65.2px;background:#dbe2ed"></div>
<div class="abs" style="left:842.2px;top:95.2px;width:0.6px;height:65.2px;background:#dbe2ed"></div>
<div class="abs" style="left:892.3px;top:95.2px;width:0.6px;height:65.2px;background:#dbe2ed"></div>
<div class="abs" style="left:122px;top:106.2px;width:770.6px;height:0.6px;background:#dbe2ed"></div>
<div class="abs" style="left:122px;top:116.98px;width:770.6px;height:0.6px;background:#dbe2ed"></div>
<div class="abs" style="left:122px;top:127.76px;width:770.6px;height:0.6px;background:#dbe2ed"></div>
<div class="abs" style="left:122px;top:138.54px;width:770.6px;height:0.6px;background:#dbe2ed"></div>
<div class="abs" style="left:122px;top:149.32px;width:770.6px;height:0.6px;background:#dbe2ed"></div>
<div class="abs" style="left:122px;top:160.1px;width:770.6px;height:0.6px;background:#dbe2ed"></div>
<svg style="left:124.2px;top:109.89px" width="3" height="4" viewBox="0 0 3 4"><path d="M0 0l2.6 2L0 4z" fill="#111"/></svg>
<div class="t" style="transform:translate(800px,479.42px) translateY(-50%) rotate(.03deg);font-size:9.8px;color:#bdbdbd">Activate Windows</div>
<div class="t" style="transform:translate(800px,490.71px) translateY(-50%) rotate(.03deg);font-size:7.4px;color:#cdcdcd">Go to Settings to activate Windows.</div>
<div class="abs" id="dlg" style="left:240px;top:133px;width:0;height:0">
<div class="abs" style="left:0.7px;top:0.7px;width:304.3px;height:272.1px;background:#d5e2f4;box-shadow:0 1px 10px 0 rgba(0,0,0,0.34), 0 0 0 0.4px rgba(120,130,145,0.18), inset -1px -1px 0 #e4edf9"></div>
<div class="abs" style="left:0.7px;top:0.7px;width:304.3px;height:12.3px;background:#fff"></div>
<div class="abs" style="left:0.7px;top:13px;width:304.3px;height:1px;background:#ecf2fa"></div>
<div class="t" style="transform:translate(2.3px,7.8px) translateY(-50%) rotate(.03deg);font-size:5.9px;color:#222">Ca làm việc</div>
<div class="abs" style="left:295.7px;top:2.1px;width:9.1px;height:9.1px;background:#c2363b"></div>
<svg style="left:298.7px;top:5.3px" width="3" height="3" viewBox="0 0 4 4"><path d="M0.5 0.5l3 3M3.5 0.5l-3 3" stroke="#fff" stroke-width="1.1"/></svg>
<div class="t" style="transform:translate(14px,30.16px) translateY(-50%) rotate(.03deg);">Tên ca</div>
<div class="t" style="transform:translate(14px,43.16px) translateY(-50%) rotate(.03deg);">Viết tắt</div>
<div class="abs" style="left:42.3px;top:25.4px;width:99px;height:9.2px;background:#ffffe1;border:0.5px solid #b9c6d8"></div>
<div class="t" style="transform:translate(43.9px,30.16px) translateY(-50%) rotate(.03deg);">Ca HC</div>
<div class="abs" style="left:42.3px;top:38.3px;width:99px;height:9.2px;background:#ffffe1;border:0.5px solid #b9c6d8"></div>
<div class="t" style="transform:translate(43.9px,43.06px) translateY(-50%) rotate(.03deg);">HC</div>
<div class="t" style="transform:translate(157px,32.36px) translateY(-50%) rotate(.03deg);">Kiểu tính giờ</div>
<div class="abs" style="left:194.2px;top:24.2px;width:100.5px;height:10.6px;background:#fff;border:0.55px solid #9fb6d6"></div>
<div class="abs" style="left:195.8px;top:26px;width:62.4px;height:6.4px;background:#2b6cd1"></div>
<div class="t" style="transform:translate(196.1px,29.26px) translateY(-50%) rotate(.03deg);color:#fff;font-size:5.25px">Vào đầu tiên ra cuối cùng</div>
<svg style="left:287.2px;top:28px" width="5" height="3" viewBox="0 0 5 3"><path d="M0.6 0.5l1.9 1.9 1.9-1.9" fill="none" stroke="#555" stroke-width="0.6"/></svg>
<svg style="left:194.2px;top:39.2px" width="6.8" height="6.8" viewBox="0 0 6.8 6.8"><rect x="0.35" y="0.35" width="6.1" height="6.1" fill="#fff" stroke="#7d7d7d" stroke-width="0.6"/><path d="M1.5 3.5l1.5 1.5 2.6-3.2" fill="none" stroke="#555" stroke-width="0.7"/></svg>
<div class="t" style="transform:translate(203.7px,42.86px) translateY(-50%) rotate(.03deg);color:#cc2f3a;-webkit-text-stroke:0.08px">Ca qua đêm</div>
<div class="abs" style="left:1.3px;top:62px;width:295.4px;height:183.6px;background:#d7e4f5;border:0.6px solid #e9f1fb"></div>
<div class="abs" style="left:2px;top:51px;width:42px;height:11px;background:#fcfdff"></div>
<div class="tc" style="transform:translate(23.2px,56.56px) translate(-50%,-50%) rotate(.03deg);">Khai báo chung</div>
<div class="abs" style="left:44.4px;top:52.4px;width:57.2px;height:9.6px;background:#e4edf9"></div>
<div class="tc" style="transform:translate(73.2px,57.26px) translate(-50%,-50%) rotate(.03deg);">Tham số tính giờ khác</div>
<div class="abs" style="left:5px;top:67px;width:288px;height:73.4px;border-bottom:0.5px solid #deeaf8"></div>
<div class="t" style="transform:translate(7.2px,66.91px) translateY(-50%) rotate(.03deg);background:#d7e4f5;padding:0 1px;font-size:5.15px">Thời gian làm việc</div>
<div class="t" style="transform:translate(23.7px,84.66px) translateY(-50%) rotate(.03deg);color:#cc2f3a;-webkit-text-stroke:0.08px">Bắt đầu làm việc</div>
<div class="abs" style="left:93.3px;top:78.5px;width:36.8px;height:9.3px;background:#fff;border:0.55px solid #a6b0c0"></div><div class="t" style="transform:translate(94.8px,83.51px) translateY(-50%) rotate(.03deg);color:#181818">08:00</div><svg style="left:121.4px;top:79.4px" width="7.6" height="7.5" viewBox="0 0 7.6 7.6" preserveAspectRatio="none"><rect x="0.25" y="0.25" width="7.1" height="7.1" fill="#f3f5f9" stroke="#c3cbd8" stroke-width="0.45"/><path d="M1.9 3.2l1.9-2 1.9 2zM1.9 4.4l1.9 2 1.9-2z" fill="#3a3a3a"/></svg>
<div class="t" style="transform:translate(167.5px,84.66px) translateY(-50%) rotate(.03deg);color:#cc2f3a;-webkit-text-stroke:0.08px">Kết thúc làm việc</div>
<div class="abs" style="left:232.8px;top:78.5px;width:36.8px;height:9.3px;background:#fff;border:0.55px solid #a6b0c0"></div><div class="t" style="transform:translate(234.3px,83.51px) translateY(-50%) rotate(.03deg);color:#181818">17:00</div><svg style="left:260.9px;top:79.4px" width="7.6" height="7.5" viewBox="0 0 7.6 7.6" preserveAspectRatio="none"><rect x="0.25" y="0.25" width="7.1" height="7.1" fill="#f3f5f9" stroke="#c3cbd8" stroke-width="0.45"/><path d="M1.9 3.2l1.9-2 1.9 2zM1.9 4.4l1.9 2 1.9-2z" fill="#3a3a3a"/></svg>
<div class="t" style="transform:translate(23.7px,97.61px) translateY(-50%) rotate(.03deg);color:#181818">Bắt đầu vào ca</div>
<div class="abs" style="left:93.3px;top:91.45px;width:36.8px;height:9.3px;background:#fff;border:0.55px solid #a6b0c0"></div><div class="t" style="transform:translate(94.8px,96.46px) translateY(-50%) rotate(.03deg);color:#181818">06:00</div><svg style="left:121.4px;top:92.35px" width="7.6" height="7.5" viewBox="0 0 7.6 7.6" preserveAspectRatio="none"><rect x="0.25" y="0.25" width="7.1" height="7.1" fill="#f3f5f9" stroke="#c3cbd8" stroke-width="0.45"/><path d="M1.9 3.2l1.9-2 1.9 2zM1.9 4.4l1.9 2 1.9-2z" fill="#3a3a3a"/></svg>
<div class="t" style="transform:translate(167.5px,97.61px) translateY(-50%) rotate(.03deg);color:#181818">Kết thúc vào ca</div>
<div class="abs" style="left:232.8px;top:91.45px;width:36.8px;height:9.3px;background:#fff;border:0.55px solid #a6b0c0"></div><div class="t" style="transform:translate(234.3px,96.46px) translateY(-50%) rotate(.03deg);color:#181818">10:00</div><svg style="left:260.9px;top:92.35px" width="7.6" height="7.5" viewBox="0 0 7.6 7.6" preserveAspectRatio="none"><rect x="0.25" y="0.25" width="7.1" height="7.1" fill="#f3f5f9" stroke="#c3cbd8" stroke-width="0.45"/><path d="M1.9 3.2l1.9-2 1.9 2zM1.9 4.4l1.9 2 1.9-2z" fill="#3a3a3a"/></svg>
<div class="t" style="transform:translate(23.7px,110.56px) translateY(-50%) rotate(.03deg);color:#181818">Bắt đầu ra về</div>
<div class="abs" style="left:93.3px;top:104.4px;width:36.8px;height:9.3px;background:#fff;border:0.55px solid #a6b0c0"></div><div class="t" style="transform:translate(94.8px,109.41px) translateY(-50%) rotate(.03deg);color:#181818">10:01</div><svg style="left:121.4px;top:105.3px" width="7.6" height="7.5" viewBox="0 0 7.6 7.6" preserveAspectRatio="none"><rect x="0.25" y="0.25" width="7.1" height="7.1" fill="#f3f5f9" stroke="#c3cbd8" stroke-width="0.45"/><path d="M1.9 3.2l1.9-2 1.9 2zM1.9 4.4l1.9 2 1.9-2z" fill="#3a3a3a"/></svg>
<div class="t" style="transform:translate(167.5px,110.56px) translateY(-50%) rotate(.03deg);color:#181818">Kết thúc ra về</div>
<div class="abs" style="left:232.8px;top:104.4px;width:36.8px;height:9.3px;background:#fff;border:0.55px solid #a6b0c0"></div><div class="t" style="transform:translate(234.3px,109.41px) translateY(-50%) rotate(.03deg);color:#181818">22:00</div><svg style="left:260.9px;top:105.3px" width="7.6" height="7.5" viewBox="0 0 7.6 7.6" preserveAspectRatio="none"><rect x="0.25" y="0.25" width="7.1" height="7.1" fill="#f3f5f9" stroke="#c3cbd8" stroke-width="0.45"/><path d="M1.9 3.2l1.9-2 1.9 2zM1.9 4.4l1.9 2 1.9-2z" fill="#3a3a3a"/></svg>
<div class="t" style="transform:translate(23.7px,123.51px) translateY(-50%) rotate(.03deg);color:#181818">Bắt đầu nghỉ giữa ca</div>
<div class="abs" style="left:93.3px;top:117.35px;width:36.8px;height:9.3px;background:#fff;border:0.55px solid #a6b0c0"></div><div class="t" style="transform:translate(94.8px,122.36px) translateY(-50%) rotate(.03deg);color:#181818">12:00</div><svg style="left:121.4px;top:118.25px" width="7.6" height="7.5" viewBox="0 0 7.6 7.6" preserveAspectRatio="none"><rect x="0.25" y="0.25" width="7.1" height="7.1" fill="#f3f5f9" stroke="#c3cbd8" stroke-width="0.45"/><path d="M1.9 3.2l1.9-2 1.9 2zM1.9 4.4l1.9 2 1.9-2z" fill="#3a3a3a"/></svg>
<div class="t" style="transform:translate(167.5px,123.51px) translateY(-50%) rotate(.03deg);color:#181818">Kết thúc nghỉ giữa ca</div>
<div class="abs" style="left:232.8px;top:117.35px;width:36.8px;height:9.3px;background:#fff;border:0.55px solid #a6b0c0"></div><div class="t" style="transform:translate(234.3px,122.36px) translateY(-50%) rotate(.03deg);color:#181818">13:00</div><svg style="left:260.9px;top:118.25px" width="7.6" height="7.5" viewBox="0 0 7.6 7.6" preserveAspectRatio="none"><rect x="0.25" y="0.25" width="7.1" height="7.1" fill="#f3f5f9" stroke="#c3cbd8" stroke-width="0.45"/><path d="M1.9 3.2l1.9-2 1.9 2zM1.9 4.4l1.9 2 1.9-2z" fill="#3a3a3a"/></svg>
<div class="t" style="transform:translate(8px,148.66px) translateY(-50%) rotate(.03deg);">Thông số tính giờ</div>
<div class="t" style="transform:translate(23.4px,159.46px) translateY(-50%) rotate(.03deg);">Làm thêm tối thiểu trước ca</div>
<div class="abs" style="left:93.3px;top:154.5px;width:41.7px;height:9.8px;background:#fff;border:0.55px solid #b2bccb"></div><div class="t" style="transform:translate(94.8px,159.76px) translateY(-50%) rotate(.03deg);color:#555">0</div><svg style="left:127.7px;top:155.4px" width="6.2" height="8" viewBox="0 0 7.6 7.6" preserveAspectRatio="none"><rect x="0.25" y="0.25" width="7.1" height="7.1" fill="#f3f5f9" stroke="#c3cbd8" stroke-width="0.45"/><path d="M1.9 3.2l1.9-2 1.9 2zM1.9 4.4l1.9 2 1.9-2z" fill="#3a3a3a"/></svg>
<svg style="left:172.6px;top:156px" width="6.8" height="6.8" viewBox="0 0 6.8 6.8"><rect x="0.35" y="0.35" width="6.1" height="6.1" fill="#fff" stroke="#7d7d7d" stroke-width="0.6"/></svg>
<div class="t" style="transform:translate(182.5px,159.46px) translateY(-50%) rotate(.03deg);">Tính làm thêm trước ca</div>
<div class="t" style="transform:translate(23.4px,172.41px) translateY(-50%) rotate(.03deg);">Làm thêm tối thiểu sau ca</div>
<div class="abs" style="left:93.3px;top:167.45px;width:41.7px;height:9.8px;background:#fff;border:0.55px solid #b2bccb"></div><div class="t" style="transform:translate(94.8px,172.71px) translateY(-50%) rotate(.03deg);color:#555">0</div><svg style="left:127.7px;top:168.35px" width="6.2" height="8" viewBox="0 0 7.6 7.6" preserveAspectRatio="none"><rect x="0.25" y="0.25" width="7.1" height="7.1" fill="#f3f5f9" stroke="#c3cbd8" stroke-width="0.45"/><path d="M1.9 3.2l1.9-2 1.9 2zM1.9 4.4l1.9 2 1.9-2z" fill="#3a3a3a"/></svg>
<svg style="left:172.6px;top:168.95px" width="6.8" height="6.8" viewBox="0 0 6.8 6.8"><rect x="0.35" y="0.35" width="6.1" height="6.1" fill="#fff" stroke="#7d7d7d" stroke-width="0.6"/><path d="M1.5 3.5l1.5 1.5 2.6-3.2" fill="none" stroke="#555" stroke-width="0.7"/></svg>
<div class="t" style="transform:translate(182.5px,172.41px) translateY(-50%) rotate(.03deg);">Tính làm thêm sau ca</div>
<div class="t" style="transform:translate(23.4px,185.36px) translateY(-50%) rotate(.03deg);">Cho phép đi muộn</div>
<div class="abs" style="left:93.3px;top:180.4px;width:41.7px;height:9.8px;background:#fff;border:0.55px solid #b2bccb"></div><div class="t" style="transform:translate(94.8px,185.66px) translateY(-50%) rotate(.03deg);color:#555">0</div><svg style="left:127.7px;top:181.3px" width="6.2" height="8" viewBox="0 0 7.6 7.6" preserveAspectRatio="none"><rect x="0.25" y="0.25" width="7.1" height="7.1" fill="#f3f5f9" stroke="#c3cbd8" stroke-width="0.45"/><path d="M1.9 3.2l1.9-2 1.9 2zM1.9 4.4l1.9 2 1.9-2z" fill="#3a3a3a"/></svg>
<svg style="left:172.6px;top:181.9px" width="6.8" height="6.8" viewBox="0 0 6.8 6.8"><rect x="0.35" y="0.35" width="6.1" height="6.1" fill="#fff" stroke="#7d7d7d" stroke-width="0.6"/><path d="M1.5 3.5l1.5 1.5 2.6-3.2" fill="none" stroke="#555" stroke-width="0.7"/></svg>
<div class="t" style="transform:translate(182.5px,185.36px) translateY(-50%) rotate(.03deg);">Trừ thời gian đi muộn vào thời gian làm</div>
<div class="t" style="transform:translate(23.4px,198.31px) translateY(-50%) rotate(.03deg);">Cho phép Về sớm</div>
<div class="abs" style="left:93.3px;top:193.35px;width:41.7px;height:9.8px;background:#fff;border:0.55px solid #b2bccb"></div><div class="t" style="transform:translate(94.8px,198.61px) translateY(-50%) rotate(.03deg);color:#555">0</div><svg style="left:127.7px;top:194.25px" width="6.2" height="8" viewBox="0 0 7.6 7.6" preserveAspectRatio="none"><rect x="0.25" y="0.25" width="7.1" height="7.1" fill="#f3f5f9" stroke="#c3cbd8" stroke-width="0.45"/><path d="M1.9 3.2l1.9-2 1.9 2zM1.9 4.4l1.9 2 1.9-2z" fill="#3a3a3a"/></svg>
<svg style="left:172.6px;top:194.85px" width="6.8" height="6.8" viewBox="0 0 6.8 6.8"><rect x="0.35" y="0.35" width="6.1" height="6.1" fill="#fff" stroke="#7d7d7d" stroke-width="0.6"/><path d="M1.5 3.5l1.5 1.5 2.6-3.2" fill="none" stroke="#555" stroke-width="0.7"/></svg>
<div class="t" style="transform:translate(182.5px,198.31px) translateY(-50%) rotate(.03deg);">Trừ thời gian về sớm vào thời gian làm</div>
<div class="t" style="transform:translate(23.4px,211.26px) translateY(-50%) rotate(.03deg);">Đơn vị làm tròn</div>
<div class="abs" style="left:93.3px;top:206.3px;width:41.7px;height:9.8px;background:#fff;border:0.55px solid #b2bccb"></div><div class="t" style="transform:translate(94.8px,211.56px) translateY(-50%) rotate(.03deg);color:#555">1</div><svg style="left:127.7px;top:207.2px" width="6.2" height="8" viewBox="0 0 7.6 7.6" preserveAspectRatio="none"><rect x="0.25" y="0.25" width="7.1" height="7.1" fill="#f3f5f9" stroke="#c3cbd8" stroke-width="0.45"/><path d="M1.9 3.2l1.9-2 1.9 2zM1.9 4.4l1.9 2 1.9-2z" fill="#3a3a3a"/></svg>
<svg style="left:172.6px;top:207.8px" width="6.8" height="6.8" viewBox="0 0 6.8 6.8"><rect x="0.35" y="0.35" width="6.1" height="6.1" fill="#fff" stroke="#7d7d7d" stroke-width="0.6"/></svg>
<div class="t" style="transform:translate(182.5px,211.26px) translateY(-50%) rotate(.03deg);">Không cần chấm công vào ca</div>
<div class="t" style="transform:translate(23.4px,224.21px) translateY(-50%) rotate(.03deg);">Hệ số công</div>
<div class="abs" style="left:93.3px;top:219.25px;width:41.7px;height:9.8px;background:#fff;border:0.55px solid #b2bccb"></div><div class="t" style="transform:translate(94.8px,224.51px) translateY(-50%) rotate(.03deg);color:#555">1.0</div><svg style="left:127.7px;top:220.15px" width="6.2" height="8" viewBox="0 0 7.6 7.6" preserveAspectRatio="none"><rect x="0.25" y="0.25" width="7.1" height="7.1" fill="#f3f5f9" stroke="#c3cbd8" stroke-width="0.45"/><path d="M1.9 3.2l1.9-2 1.9 2zM1.9 4.4l1.9 2 1.9-2z" fill="#3a3a3a"/></svg>
<svg style="left:172.6px;top:220.75px" width="6.8" height="6.8" viewBox="0 0 6.8 6.8"><rect x="0.35" y="0.35" width="6.1" height="6.1" fill="#fff" stroke="#7d7d7d" stroke-width="0.6"/></svg>
<div class="t" style="transform:translate(182.5px,224.21px) translateY(-50%) rotate(.03deg);">Không cần chấm công ra về</div>
<div class="t" style="transform:translate(3.2px,263.86px) translateY(-50%) rotate(.03deg);color:#cc2f3a;-webkit-text-stroke:0.08px">Thời gian làm việc: 480 phút</div>
<div class="abs" style="left:178px;top:255px;width:37.6px;height:11.3px;background:#dbe6f6;border:0.6px solid #9eadc4"></div>
<div class="abs" style="left:180px;top:257px;width:33.6px;height:7.3px;border:0.5px dotted #c2cddd"></div>
<div class="t" style="transform:translate(194.7px,261.56px) translateY(-50%) rotate(.03deg);color:#222">Lưu</div>
<div class="abs" style="left:218.4px;top:255px;width:37.6px;height:11.3px;background:#dbe6f6;border:0.6px solid #bccadd"></div>
<div class="t" style="transform:translate(235.8px,261.56px) translateY(-50%) rotate(.03deg);color:#8a8f98">Xóa</div>
<div class="abs" style="left:258.8px;top:255px;width:37.6px;height:11.3px;background:#dbe6f6;border:0.6px solid #9eadc4"></div>
<div class="t" style="transform:translate(274.2px,261.56px) translateY(-50%) rotate(.03deg);color:#222">Thoát</div>
<svg style="left:187px;top:257.5px" width="7.4" height="7.2" viewBox="0 0 7.4 7.2"><path d="M1.6 3.4V0.5h3.4l1.9 1.9v4.3H3.4" fill="#f2f6fc" stroke="#3a68a6" stroke-width="0.75"/><circle cx="2.2" cy="5" r="2" fill="#1f5aa8"/><circle cx="2.2" cy="5" r="0.75" fill="#e8effa"/></svg>
<svg style="left:228.3px;top:257.4px" width="5.2" height="7" viewBox="0 0 5.2 7"><path d="M0.8 2h3.6v4.5H0.8z" fill="#d0d6df" stroke="#9aa3b1" stroke-width="0.6"/><path d="M0.2 1.7h4.8M1.8 1.5V0.6h1.6v0.9" fill="none" stroke="#9aa3b1" stroke-width="0.6"/><path d="M1.9 3v2.6M3.3 3v2.6" stroke="#9aa3b1" stroke-width="0.4"/></svg>
<svg style="left:265.8px;top:257.3px" width="6" height="7.2" viewBox="0 0 6 7.2"><rect x="0.5" y="0.5" width="5" height="6.2" rx="0.5" fill="#f2f6fc" stroke="#2f5f9f" stroke-width="0.8"/><path d="M1.5 3h1.8V2l2 1.6-2 1.6V4.2H1.5z" fill="#1f5aa8"/></svg>
</div>
<svg style="left:549.6px;top:190.4px" width="6" height="9" viewBox="0 0 6 9"><path d="M0.4 0.4v6.8l1.6-1.5 1.1 2.6 1-0.4-1.1-2.5h2.2z" fill="#fff" stroke="#222" stroke-width="0.5"/></svg>
<div class="abs" style="left:0;top:520.2px;width:960px;height:19.8px;background:#0d0e12"></div>
<div class="abs" style="left:148.3px;top:520.2px;width:23.7px;height:19.8px;background:#34363c"></div>
<div class="abs" style="left:52px;top:538.6px;width:20px;height:1.4px;background:#8fb8e6"></div>
<div class="abs" style="left:76.7px;top:538.6px;width:19.6px;height:1.4px;background:#8fb8e6"></div>
<div class="abs" style="left:101px;top:538.6px;width:19.8px;height:1.4px;background:#8fb8e6"></div>
<div class="abs" style="left:125.6px;top:538.6px;width:19.8px;height:1.4px;background:#8fb8e6"></div>
<div class="abs" style="left:148.3px;top:538.6px;width:23.7px;height:1.4px;background:#8fb8e6"></div>
<svg style="left:8px;top:526px" width="8.2" height="8.2" viewBox="0 0 8.6 8.6"><path d="M0 1.2l3.6-0.5v3.4H0zM4.1 0.6L8.6 0v4.1H4.1zM0 4.6h3.6v3.4L0 7.5zM4.1 4.6h4.5v4L4.1 8z" fill="#fff"/></svg>
<svg style="left:33px;top:524.4px" width="9.4" height="11.6" viewBox="0 0 9.4 11.6"><rect x="0.3" y="0.3" width="8.8" height="11" rx="0.6" fill="#f2f2f2"/><rect x="1.3" y="1.3" width="6.8" height="2" fill="#1a1a1a"/><g fill="#2a2a2a"><rect x="1.4" y="4.8" width="1.6" height="1.4"/><rect x="3.9" y="4.8" width="1.6" height="1.4"/><rect x="6.4" y="4.8" width="1.6" height="1.4"/><rect x="1.4" y="7" width="1.6" height="1.4"/><rect x="3.9" y="7" width="1.6" height="1.4"/><rect x="6.4" y="7" width="1.6" height="1.4"/><rect x="1.4" y="9.2" width="1.6" height="1.4"/><rect x="3.9" y="9.2" width="1.6" height="1.4"/><rect x="6.4" y="9.2" width="1.6" height="1.4"/></g></svg>
<svg style="left:56.3px;top:525.4px" width="11.2" height="8.8" viewBox="0 0 11.2 8.8"><path d="M0.3 0.5h3.8l0.9 1h5.9v7H0.3z" fill="#f0d470"/><path d="M0.3 2.4h10.6v6.1H0.3z" fill="#f6e39a"/><rect x="1.6" y="4.6" width="8" height="3.9" fill="#86cdb0"/><rect x="3.2" y="6" width="4.8" height="1.1" fill="#f3f0d0"/></svg>
<svg style="left:80.6px;top:524.8px" width="10.6" height="10.6" viewBox="0 0 10.6 10.6"><path d="M5.3 0.4l4.7 2.2v5.4l-4.7 2.2L0.6 8V2.6z" fill="#1d3f7a" stroke="#e6ecf5" stroke-width="0.8"/><path d="M0.6 2.6l4.7 2.2 4.7-2.2M5.3 4.8v5.4" fill="none" stroke="#e6ecf5" stroke-width="0.8"/></svg>
<svg style="left:105px;top:524.4px" width="11.6" height="11.6" viewBox="-5.8 -5.8 11.6 11.6"><circle r="5.6" fill="#e8453c"/><path d="M0 0L-4.85 -2.8A5.6 5.6 0 000 5.6z" fill="#2da94f" transform="rotate(0)"/><path d="M0 0L-4.85-2.8A5.6 5.6 0 002.2 5.15z" fill="#2da94f"/><path d="M0 0L2.2 5.15A5.6 5.6 0 004.85-2.8z" fill="#fcc31e"/><circle r="2.7" fill="#fff"/><circle r="2.1" fill="#4a8af4"/></svg>
<svg style="left:129.2px;top:524.6px" width="12.6" height="11" viewBox="0 0 12.6 11"><rect x="0.3" y="0.6" width="11" height="9.8" rx="1" fill="#1b2a6b"/><path d="M10.6 3.2l1.8-0.6v5.8l-1.8-0.6z" fill="#22357f"/><circle cx="5.2" cy="5.4" r="3.7" fill="#c4141f"/><circle cx="5.2" cy="5.4" r="2.6" fill="#e2222e"/><path d="M3.6 5.4h3.2" stroke="#7a0c12" stroke-width="0.8"/></svg>
<div class="abs" style="left:155.4px;top:526.6px;width:9.2px;height:6.6px;background:#1c3d78"></div>
<div class="tc" style="transform:translate(159.6px,530.65px) translate(-50%,-50%) rotate(.03deg);font-size:4.6px;font-weight:bold;color:#b5d6f7;letter-spacing:0.7px">FT</div>
<svg style="left:835.6px;top:527.6px" width="6" height="4" viewBox="0 0 6 4"><path d="M0.5 3.3l2.5-2.5 2.5 2.5" fill="none" stroke="#fff" stroke-width="0.7"/></svg>
<div class="abs" style="left:846.4px;top:526.2px;width:8.2px;height:7.6px;background:#f4dede;border:0.5px solid #d98a8a"></div>
<div class="tc" style="transform:translate(850.5px,529.92px) translate(-50%,-50%) rotate(.03deg);font-size:6px;font-weight:bold;color:#c4242c">V</div>
<svg style="left:859.6px;top:526.6px" width="7" height="7" viewBox="0 0 7 7"><path d="M0.6 6.4A5.8 5.8 0 016.4 0.6M2 6.4A4.4 4.4 0 016.4 2M3.6 6.4a2.8 2.8 0 012.8-2.8" fill="none" stroke="#9a9a9a" stroke-width="0.7"/><path d="M5 6.4h1.4v-1.4z" fill="#ddd"/></svg>
<svg style="left:869.8px;top:526.6px" width="8" height="7" viewBox="0 0 8 7"><path d="M0.4 2.4h1.6l2-1.8v5.8l-2-1.8H0.4z" fill="none" stroke="#e8e8e8" stroke-width="0.6"/><path d="M5 2.2q0.9 1.3 0 2.6M6.2 1.2q1.6 2.3 0 4.6" fill="none" stroke="#cfcfcf" stroke-width="0.5"/></svg>
<div class="t" style="transform:translate(883.3px,530px) translateY(-50%) rotate(.03deg);font-size:5.1px;color:#fff">ENG</div>
<div class="tc" style="transform:translate(916.2px,525.36px) translate(-50%,-50%) rotate(.03deg);font-size:5.3px;color:#fff">17:44</div>
<div class="tc" style="transform:translate(916.4px,534.38px) translate(-50%,-50%) rotate(.03deg);font-size:5.6px;color:#fff">19/05/2018</div>
<svg style="left:938.8px;top:525.4px" width="13" height="11" viewBox="0 0 13 11"><path d="M0.6 0.6h8.6v6.2H4.2L2.6 8.4V6.8H0.6z" fill="#f2f2f2"/><path d="M2 2.4h5.8M2 4h5.8" stroke="#555" stroke-width="0.5"/><circle cx="8.8" cy="7.2" r="3.1" fill="#0d0e12" stroke="#f2f2f2" stroke-width="0.6"/></svg>
<div class="tc" style="transform:translate(947.6px,533.45px) translate(-50%,-50%) rotate(.03deg);font-size:4.6px;color:#fff">2</div>
<div class="abs" style="left:956.6px;top:520.2px;width:0.5px;height:19.8px;background:#6a6a6a"></div>
</body></html>
